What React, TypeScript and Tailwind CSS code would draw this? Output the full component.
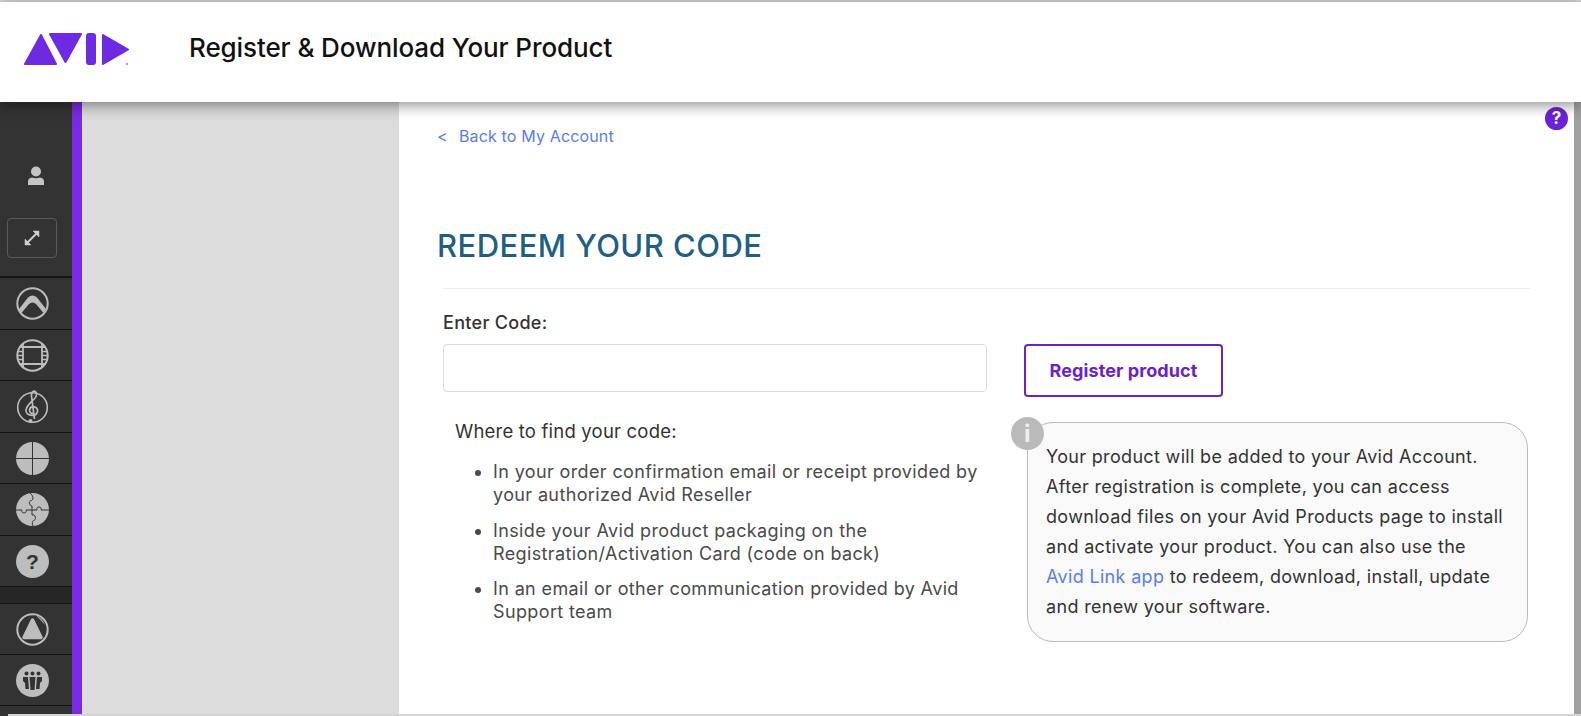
import React from 'react';

const font = "font-['Inter','Liberation_Sans',sans-serif]";

const AvidLogo = () => (
  <svg width="110" height="36" viewBox="0 0 110 36" className="block">
    <g fill="#6d2ae2" stroke="#6d2ae2" strokeWidth="2" strokeLinejoin="round">
      <path d="M17 3 L1 32 L32 32 Z" />
      <path d="M26 2 L57 2 L41.5 30 Z" />
      <rect x="63" y="2" width="8" height="30" rx="2" />
      <path d="M79 3 L104 17.5 L79 32 Z" />
    </g>
    <circle cx="103" cy="32" r="1.3" fill="#b9a3e8" />
  </svg>
);

const Ring = () => <circle cx="16.5" cy="16.5" r="15.2" fill="none" stroke="#bdbdbd" strokeWidth="2" />;
const Disc = () => <circle cx="16.5" cy="16.5" r="16.5" fill="#bdbdbd" />;

const IconProTools = () => (
  <svg width="33" height="33" viewBox="0 0 33 33">
    <Ring />
    <path d="M3 22 L12 10.5 Q16.5 6.5 21 10.5 L30 22 L27.5 26 L20.5 17.5 Q16.5 13.5 12.5 17.5 L5.5 26 Z" fill="#bdbdbd" />
  </svg>
);

const IconFilm = () => (
  <svg width="33" height="33" viewBox="0 0 33 33" fill="none" stroke="#bdbdbd">
    <Ring />
    <path d="M7 4 V29 M26 4 V29 M3 8 H30 M3 25 H30" strokeWidth="1.8" />
    <path d="M2 12.5 H7 M2 16.5 H7 M2 20.5 H7 M26 12.5 H31 M26 16.5 H31 M26 20.5 H31" strokeWidth="1.4" />
  </svg>
);

const IconClef = () => (
  <svg width="33" height="36" viewBox="0 -2 33 36" fill="none" stroke="#bdbdbd">
    <circle cx="16.5" cy="16.5" r="14.8" strokeWidth="1.6" />
    <path d="M18.5 28 L15.5 5 C15 0 19.5 -2 20.5 3 C21.5 8 11 12 10 19 C9.5 25 20 26.5 21.5 20.5 C22.5 15 14.5 14 13.5 19 C13.5 22 16 23 17 22" strokeWidth="1.7" />
    <circle cx="14.5" cy="30" r="2" fill="#bdbdbd" stroke="none" />
  </svg>
);

const IconCross = () => (
  <svg width="33" height="33" viewBox="0 0 33 33">
    <Disc />
    <path d="M16.5 0 V33 M0 16.5 H33" stroke="#333" strokeWidth="1" />
  </svg>
);

const IconPuzzle = () => (
  <svg width="33" height="33" viewBox="0 0 33 33">
    <Disc />
    <path
      d="M0 17 H6 C4.5 21 11.5 21 10 17 H16 V13 C12.5 12 12.5 8 15.5 7.5 C18.5 6 16.5 2 14 0 M16 17 H21 C19.5 13 26.5 13 25 17 H33 M16 17 V22 C19.5 20.5 21 27 17.5 27.5 C16 28 16 31 17 33"
      fill="none"
      stroke="#333"
      strokeWidth="1"
    />
  </svg>
);

const IconHelp = () => (
  <svg width="33" height="33" viewBox="0 0 33 33">
    <Disc />
    <text x="16.5" y="23.5" textAnchor="middle" fontFamily="Liberation Sans, sans-serif" fontWeight="700" fontSize="21" fill="#333">?</text>
  </svg>
);

const IconTriangle = () => (
  <svg width="33" height="33" viewBox="0 0 33 33">
    <Ring />
    <path d="M16.5 7 L25 24.5 L8 24.5 Z" fill="#bdbdbd" stroke="#bdbdbd" strokeWidth="3.5" strokeLinejoin="round" />
    <path d="M18 1.5 Q26 5 28.5 15 L25 10 Q22 5 18 1.5 Z M4 23 Q2 13 7 7 L5.5 13 Q4.5 18 4 23 Z M9 28 Q17 27 25 27 Q17 31.5 9 28 Z" fill="#333" />
    <path d="M20 2.5 Q26 5 29 12 Q25 7 20 2.5 Z" fill="#bdbdbd" />
  </svg>
);

const IconPeople = () => (
  <svg width="33" height="33" viewBox="0 0 33 33">
    <Disc />
    <g fill="#333">
      <circle cx="10.5" cy="9.5" r="2" />
      <circle cx="16.5" cy="9.5" r="2" />
      <circle cx="22.5" cy="9.5" r="2" />
      <path d="M13.5 13 H19.5 L19 19 L18.5 26 H14.5 L14 19 Z" />
      <path d="M7 13 H12 L12.5 19 L13 25 H9.5 L9 19 L7 17 Z" />
      <path d="M26 13 H21 L20.5 19 L20 25 H23.5 L24 19 L26 17 Z" />
    </g>
  </svg>
);

const sideRows = [
  { id: 'pt', icon: <IconProTools />, h: 'h-[52px]' },
  { id: 'film', icon: <IconFilm />, h: 'h-[51px]' },
  { id: 'clef', icon: <IconClef />, h: 'h-[52px]' },
  { id: 'cross', icon: <IconCross />, h: 'h-[51px]' },
  { id: 'puzzle', icon: <IconPuzzle />, h: 'h-[52px]' },
  { id: 'help', icon: <IconHelp />, h: 'h-[51px]' },
];

const Sidebar = () => (
  <aside className="w-[72px] shrink-0 bg-[#333333] flex flex-col">
    <div className="h-[176px] shrink-0 flex flex-col items-center border-b-2 border-[#141414]">
      <svg width="18" height="20" viewBox="0 0 18 20" className="mt-[64px]">
        <circle cx="9" cy="5.5" r="5" fill="#c4c4c4" />
        <path d="M1 19 V15.5 Q1 12 5 11.5 Q9 13 13 11.5 Q17 12 17 15.5 V19 Z" fill="#c4c4c4" />
      </svg>
      <div className="mt-[32px] w-[50px] h-[40px] mr-[8px] rounded border border-[#5a5a5a] flex items-center justify-center">
        <svg width="20" height="20" viewBox="0 0 20 20" fill="#cfcfcf" stroke="#cfcfcf" strokeWidth="2">
          <path d="M4 16 L16 4" />
          <path d="M11 3 H17 V9 Z M3 11 V17 H9 Z" strokeWidth="0.5" />
        </svg>
      </div>
    </div>
    {sideRows.map(r => (
      <div key={r.id} className={`${r.h} shrink-0 pr-[7px] flex items-center justify-center border-b border-[#141414]`}>
        {r.icon}
      </div>
    ))}
    <div className="h-[17px] shrink-0 bg-[#262626] border-b border-[#141414]" />
    <div className="h-[51px] shrink-0 pr-[7px] flex items-center justify-center border-b border-[#141414]"><IconTriangle /></div>
    <div className="h-[51px] shrink-0 pr-[7px] flex items-center justify-center border-b border-[#141414]"><IconPeople /></div>
  </aside>
);

export default function App() {
  return (
    <div className={`h-screen w-full flex flex-col overflow-hidden bg-white ${font}`}>
      <div className="h-[2px] shrink-0 bg-[#d9d9d9]" />
      <header className="relative z-10 h-[100px] shrink-0 bg-white flex items-center shadow-[0_3px_14px_rgba(0,0,0,0.45)]">
        <div className="ml-[24px] mb-[4px] w-[165px]">
          <AvidLogo />
        </div>
        <h1 className="mb-[10px] text-[26px] font-medium tracking-[-0.1px] text-[#111]">Register &amp; Download Your Product</h1>
      </header>

      <div className="flex-1 min-h-0 flex">
        <Sidebar />
        <div className="w-[10px] shrink-0 bg-[#7a2ae2]" />
        <div className="w-[317px] shrink-0 bg-[#dcdcdc]" />

        <main className="relative flex-1 bg-white pl-[38px] pr-[44px]">
          <a href="#" className="mt-[23px] flex items-center text-[16px] tracking-[0.15px] leading-[22px] text-[#5b7cf0]">
            <span className="w-[22px]">&lt;</span>
            <span>Back to My Account</span>
          </a>
          <h2 className="mt-[79px] text-[31px] tracking-[0.45px] leading-[40px] font-medium text-[#1f5f85]">REDEEM YOUR CODE</h2>
          <hr className="mt-[22px] ml-[6px] border-0 border-t border-[#ececec]" />

          <div className="ml-[6px] mt-[22px] flex">
            <div className="w-[544px] shrink-0">
              <label className="block text-[18px] tracking-[0.3px] leading-[24px] font-medium text-[#333]">Enter Code:</label>
              <input className="mt-[9px] block w-full h-[48px] rounded border border-[#dddddd] bg-white" />
              <p className="mt-[27px] ml-[12px] text-[18.5px] tracking-[0.2px] leading-[24px] text-[#333]">Where to find your code:</p>
              <ul className="mt-[17px] ml-[50px] mr-[6px] list-disc text-[18px] tracking-[0.37px] leading-[23px] text-[#4a4a4a]">
                <li>In your order confirmation email or receipt provided by your authorized Avid Reseller</li>
                <li className="mt-[12.5px]">Inside your Avid product packaging on the Registration/Activation Card (code on back)</li>
                <li className="mt-[12.5px]">In an email or other communication provided by Avid Support team</li>
              </ul>
            </div>

            <div className="ml-[37px] flex-1 pt-[33px]">
              <button className="w-[199px] h-[53px] rounded border-2 border-[#6a22cf] bg-white text-[18px] tracking-[0.1px] font-bold text-[#6a22cf]">Register product</button>
              <div className="relative mt-[25px] ml-[3px] w-[501px] h-[220px] rounded-[26px] border border-[#bbbbbb] bg-[#fafafa] pl-[18px] pr-[21px] pt-[19px] text-[18px] tracking-[0.33px] leading-[30px] text-[#333]">
                Your product will be added to your Avid Account. After registration is complete, you can access download files on your Avid Products page to install and activate your product. You can also use the <a href="#" className="text-[#5b7cf0]">Avid Link app</a> to redeem, download, install, update and renew your software.
                <span className="absolute left-[-17px] top-[-6px] w-[33px] h-[33px] rounded-full bg-[#bababa] flex items-center justify-center text-[24px] font-bold text-[#efefef]">i</span>
              </div>
            </div>
          </div>

          <span className="absolute right-[6px] top-[5px] w-[23px] h-[23px] rounded-full bg-[#6d22d8] flex items-center justify-center text-[17px] font-bold text-white">?</span>
        </main>
        <div className="w-[7px] shrink-0 bg-[#a0a0a0]" />
      </div>
      <div className="h-[2px] shrink-0 flex">
        <div className="w-[8px] bg-[#333333]" />
        <div className="flex-1 bg-[#d4d4d4]" />
      </div>
    </div>
  );
}
